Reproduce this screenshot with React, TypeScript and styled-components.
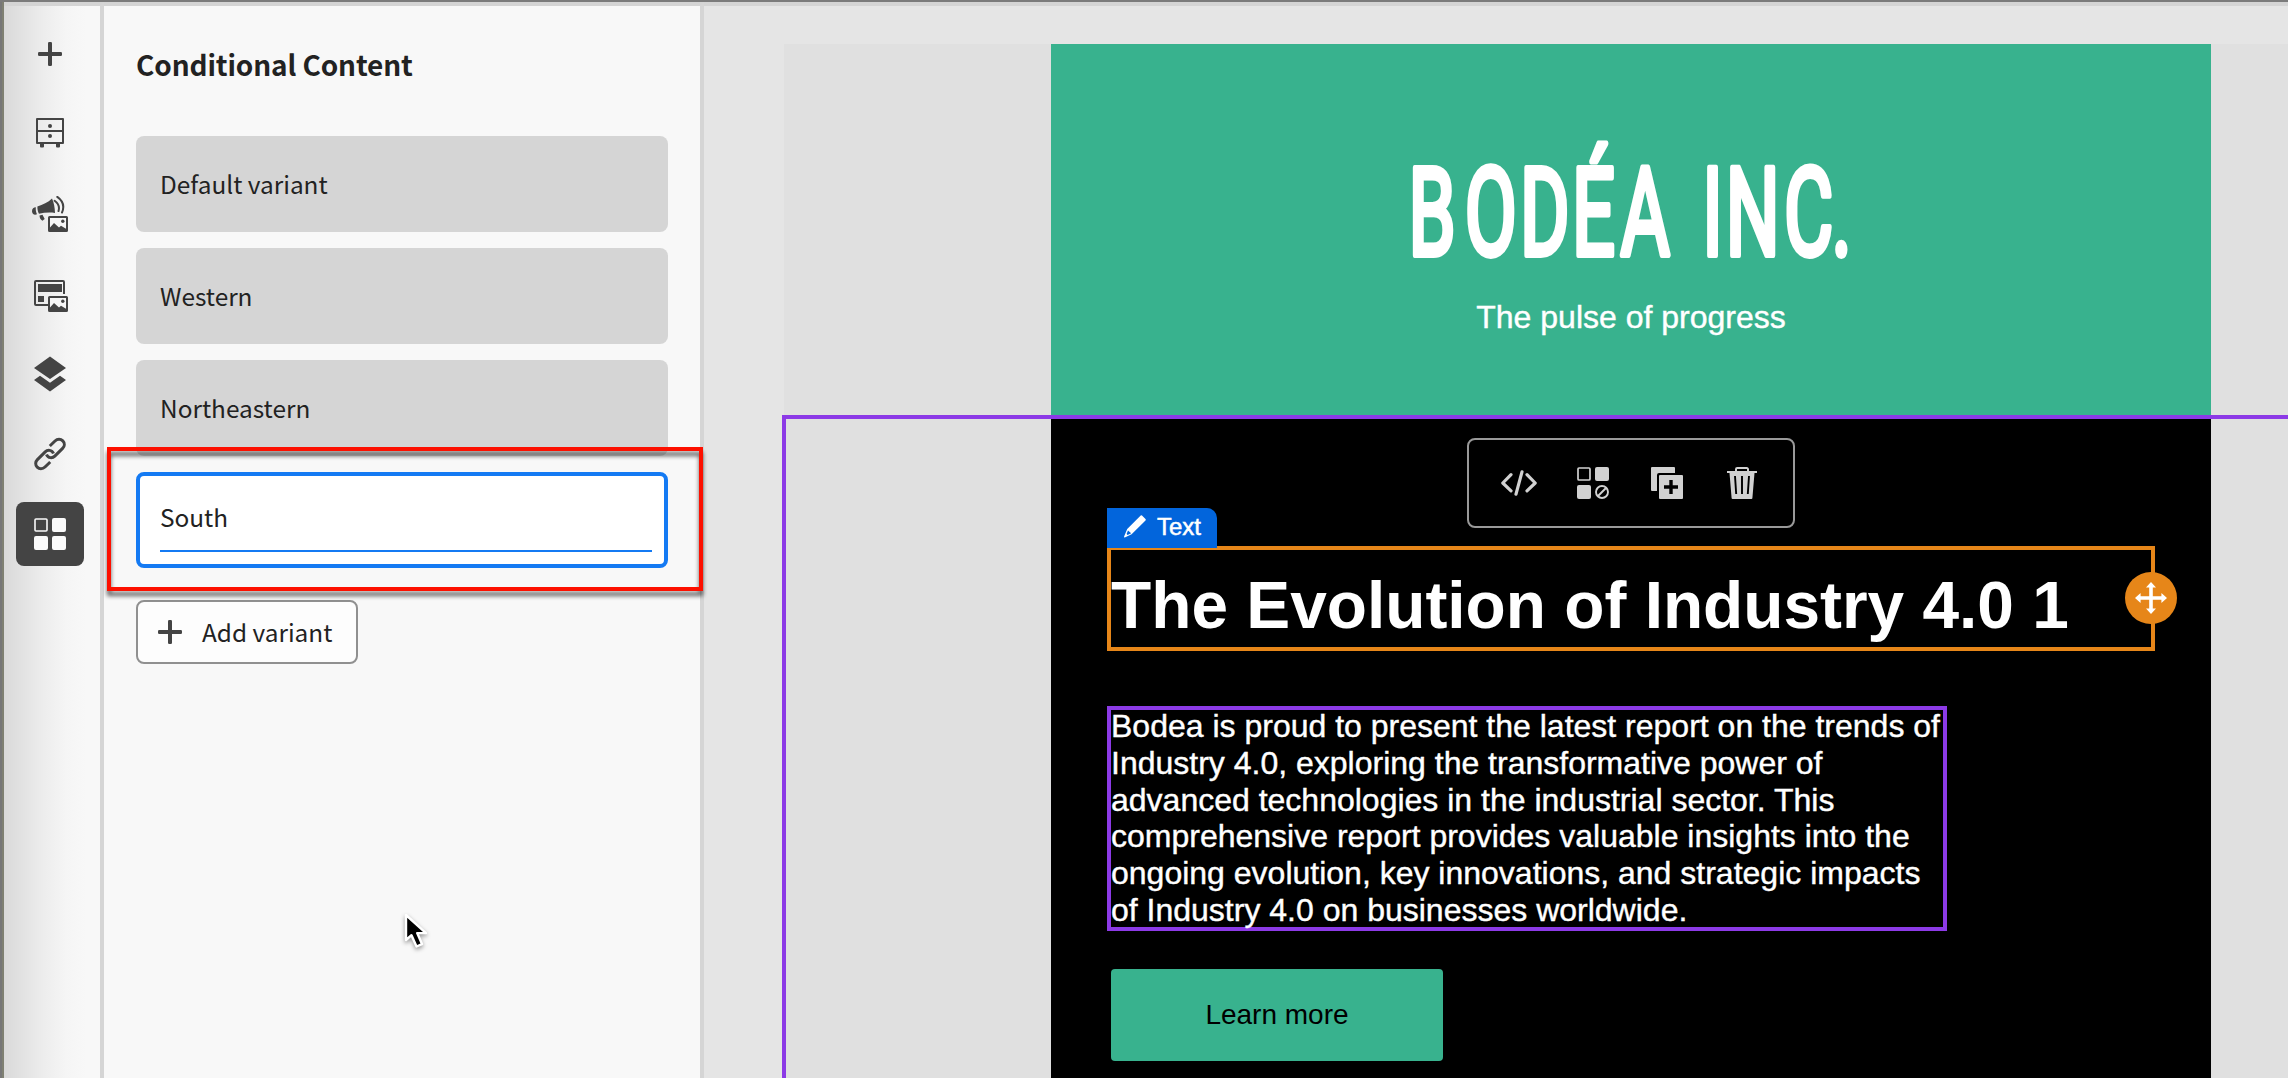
import React from "react";
import styled, { createGlobalStyle } from "styled-components";

const clean = `"Noto Sans CJK SC", "Noto Sans", sans-serif`;
const arial = `"Liberation Sans", Arial, sans-serif`;

const GlobalStyle = createGlobalStyle`
  *, *::before, *::after { box-sizing: border-box; }
  body { margin: 0; overflow: hidden; background: #e5e5e5; }
  h1, h2, p { margin: 0; }
  button { font: inherit; color: inherit; border: 0; padding: 0; margin: 0; background: none; }
`;

const Window = styled.div`
  position: relative;
  display: flex;
  width: 2288px;
  height: 1078px;
  overflow: hidden;
  border-top: 2px solid #7b7b7b;
  font-family: ${clean};
  color: #222;
`;

const EdgeStrip = styled.div`
  flex: none;
  width: 4px;
  background: linear-gradient(90deg, #777 0 50%, #7f8072 50%);
`;

const Rail = styled.nav`
  flex: none;
  width: 100px;
  border-top: 4px solid #d4d4d4;
  border-right: 4px solid #d5d5d5;
  padding: 16px 0 0 12px;
  display: flex;
  flex-direction: column;
  gap: 16px;
  background: linear-gradient(90deg, #d9d9d9 0, #e2e2e2 18px, #ededed 40px, #f5f5f5 62px, #f8f8f8 82px);
`;

const RailButton = styled.button<{ $active?: boolean }>`
  width: 68px;
  height: 64px;
  border-radius: 8px;
  display: flex;
  align-items: center;
  justify-content: center;
  background: ${(p) => (p.$active ? "#444" : "transparent")};
  color: ${(p) => (p.$active ? "#fafafa" : "#444")};
`;

const Panel = styled.aside`
  flex: none;
  width: 600px;
  border-top: 4px solid #d4d4d4;
  border-right: 4px solid #d5d5d5;
  background: #f8f8f8;
  padding: 36px 32px 0;
`;

const PanelTitle = styled.h2`
  height: 94px;
  line-height: 44px;
  font-size: 28px;
  font-weight: 700;
  letter-spacing: -0.12px;
`;

const VariantList = styled.div`
  display: flex;
  flex-direction: column;
  gap: 16px;
`;

const Variant = styled.div`
  height: 96px;
  border-radius: 8px;
  background: #d5d5d5;
  padding: 0 24px 1px;
  display: flex;
  align-items: center;
  font-size: 24.4px;
`;

const VariantEditor = styled.div`
  height: 96px;
  border-radius: 8px;
  border: 4px solid #147af3;
  background: #fff;
  padding: 16px 12px 0 20px;
`;

const VariantInput = styled.div`
  height: 60px;
  border-bottom: 2px solid #147af3;
  font-size: 24.4px;
  line-height: 50px;
`;

const AddVariant = styled.button`
  margin-top: 32px;
  width: 222px;
  height: 64px;
  border: 2px solid #909090;
  border-radius: 8px;
  background: #fdfdfd;
  padding-left: 20px;
  display: flex;
  align-items: center;
  gap: 20px;
  font-size: 24.4px;
  white-space: nowrap;
`;

const AddLabel = styled.span`
  padding-bottom: 2px;
`;

const Highlight = styled.div`
  position: absolute;
  left: 107px;
  top: 445px;
  width: 596px;
  height: 144px;
  border: 4px solid #fd1000;
  filter: drop-shadow(0 5px 2px rgba(0, 0, 0, 0.6));
`;

const Pointer = styled.svg`
  position: absolute;
  left: 398px;
  top: 903px;
`;

const Canvas = styled.main`
  flex: 1;
  min-width: 0;
  border-top: 4px solid #d4d4d4;
  background: #e5e5e5;
  padding: 38px 0 0 80px;
  font-family: ${arial};
`;

const Stage = styled.div`
  height: 100%;
  background: #e0e0e0;
  display: flex;
  flex-direction: column;
`;

const Header = styled.section`
  flex: none;
  margin-left: 267px;
  width: 1160px;
  height: 371px;
  background: #38b28e;
  color: #fff;
  display: flex;
  flex-direction: column;
  align-items: center;
  padding-top: 73px;
`;

const Tagline = styled.p`
  margin-top: 42px;
  font-size: 32px;
  line-height: 37px;
  -webkit-text-stroke: 0.4px #fff;
`;

const Structure = styled.section`
  flex: 1;
  margin-left: -2px;
  border: solid #8c3ae6;
  border-width: 4px 0 0 4px;
`;

const Body = styled.div`
  position: relative;
  margin-left: 265px;
  width: 1160px;
  height: 100%;
  padding: 127px 0 0 56px;
  background: #000;
  color: #fff;
`;

const Toolbar = styled.div`
  position: absolute;
  left: 416px;
  top: 19px;
  width: 328px;
  height: 90px;
  border: 2px solid #999;
  border-radius: 8px;
  background: #000;
  color: #d1d1d1;
  display: flex;
  align-items: center;
  padding-left: 32px;
  gap: 38.2px;
`;

const Selected = styled.div`
  position: relative;
  width: 1048px;
  height: 105px;
  border: 4px solid #e68619;
`;

const Heading = styled.h1`
  font-size: 65.8px;
  line-height: 77px;
  padding-top: 17px;
  font-weight: 700;
  white-space: nowrap;
`;

const Tag = styled.div`
  position: absolute;
  left: -4px;
  top: -42px;
  width: 110px;
  height: 40px;
  border-top-right-radius: 10px;
  background: #0265dc;
  display: flex;
  align-items: center;
  padding: 0 0 3px 17px;
  gap: 11px;
  font-size: 24px;
  -webkit-text-stroke: 0.5px #fff;
`;

const MoveHandle = styled.div`
  position: absolute;
  right: -26px;
  top: 22px;
  width: 52px;
  height: 52px;
  border-radius: 50%;
  background: #e68619;
  display: flex;
  align-items: center;
  justify-content: center;
`;

const Copy = styled.p`
  margin-top: 55px;
  width: 840px;
  height: 225px;
  border: 4px solid #8c3ae6;
  font-size: 32px;
  line-height: 36.8px;
  white-space: nowrap;
  -webkit-text-stroke: 0.4px #fff;
`;

const CopyText = styled.span`
  display: block;
  margin-top: -2px;
`;

const LearnMore = styled.button`
  display: block;
  margin: 38px 0 0 4px;
  width: 332px;
  height: 92px;
  border-radius: 4px;
  background: #38b28e;
  color: #000;
  font-size: 28px;
`;

const LogoText = styled.text`
  font-family: Roboto, sans-serif;
  font-size: 122px;
  font-weight: 400;
  fill: #fff;
  stroke: #fff;
  stroke-width: 5px;
  stroke-linejoin: round;
  vector-effect: non-scaling-stroke;
`;

const Picture = ({ x, y }: { x: number; y: number }) => (
  <g transform={`translate(${x} ${y})`}>
    <rect x="1" y="1" width="18" height="14" rx="0.5" fill="#f6f6f6" stroke="currentColor" strokeWidth="2" />
    <circle cx="14.8" cy="5.2" r="1.7" fill="currentColor" />
    <path d="M2 11.5 6 7l5 4.5 2-1.8 5 3V15H2z" fill="currentColor" />
  </g>
);

const Plus = () => (
  <svg width="24" height="24" viewBox="0 0 24 24" fill="#444">
    <rect x="10" y="0" width="4" height="24" rx="1.2" />
    <rect x="0" y="10" width="24" height="4" rx="1.2" />
  </svg>
);

const Icon = ({ children }: { children: React.ReactNode }) => (
  <svg width="36" height="36" viewBox="0 0 36 36" fill="none" stroke="none">
    {children}
  </svg>
);

const Cabinet = () => (
  <Icon>
    <path d="M5 3h26v24H5zM5 15h26" stroke="currentColor" strokeWidth="2" strokeLinejoin="round" />
    <circle cx="18" cy="10" r="2" fill="currentColor" />
    <circle cx="18" cy="20" r="2" fill="currentColor" />
    <path d="M8 27h4v3.5a1 1 0 0 1-1 1H9a1 1 0 0 1-1-1zM24 27h4v3.5a1 1 0 0 1-1 1h-2a1 1 0 0 1-1-1z" fill="currentColor" />
  </Icon>
);

const Megaphone = () => (
  <Icon>
    <path d="M20 2.6c2 4.2 2.8 9.200 3 14.400C17.500 16.200 12 16.700 7 17.800 5.800 15.500 5.300 13 5.400 10.400 10.800 8.800 16 6.500 20 2.600z" fill="currentColor" />
    <path d="M3.900 11.300c-.4 2.200 0 4.700 1.100 6.900C2.400 19.600 0 17.800 0 15.300c0-2.500 1.600-3.900 3.900-4z" fill="currentColor" />
    <path d="m7.500 19.600 3-.8 2.200 4.200-2.300 1.800c-1.800-.8-2.800-2.900-2.900-5.200z" fill="currentColor" />
    <path d="M22.600 4.800c3.900 2.700 5.100 6.300 3.900 10.300M25.300.9c5.600 4 7.300 9.600 4.700 15.600" stroke="currentColor" strokeWidth="2" strokeLinecap="round" />
    <Picture x={16} y={20} />
  </Icon>
);

const Template = () => (
  <Icon>
    <path d="M32 18V6a1 1 0 0 0-1-1H4a1 1 0 0 0-1 1v22a1 1 0 0 0 1 1h12" stroke="currentColor" strokeWidth="2" />
    <path d="M6 8h24v8H6zM6 20h6v6H6z" fill="currentColor" />
    <Picture x={16} y={20} />
  </Icon>
);

const Layers = () => (
  <Icon>
    <path d="m18 .5 16 11.400L18 23 2 11.900zM8 19.800l10 7 10-7 6 4.200-16 11.500L2 24z" fill="currentColor" />
  </Icon>
);

const Link = () => (
  <Icon>
    <g stroke="currentColor" strokeWidth="3">
      <path d="M17.800 10 23 5c2.400-2.300 5.700-2.200 7.800-.1s2 5.300-.2 7.500l-7.800 7.700c-2.300 2.300-6.800 2.300-8.300-1.600" />
      <path d="m18.200 26-5.200 5c-2.400 2.300-5.700 2.200-7.800.1s-2-5.300.2-7.500l7.800-7.700c2.300-2.300 6.800-2.300 8.300 1.600" />
    </g>
  </Icon>
);

const Variants = () => (
  <Icon>
    <rect x="3" y="3" width="12" height="12" rx="1" stroke="currentColor" strokeWidth="1.600" />
    <path d="M22 2h10a2 2 0 0 1 2 2v10a2 2 0 0 1-2 2H22a2 2 0 0 1-2-2V4a2 2 0 0 1 2-2zM4 20h10a2 2 0 0 1 2 2v10a2 2 0 0 1-2 2H4a2 2 0 0 1-2-2V22a2 2 0 0 1 2-2zM22 20h10a2 2 0 0 1 2 2v10a2 2 0 0 1-2 2H22a2 2 0 0 1-2-2V22a2 2 0 0 1 2-2z" fill="currentColor" />
  </Icon>
);

const Code = () => (
  <Icon>
    <path d="M10 9.600 1.800 18l8.200 7.800M26 9.600l8.200 8.400-8.200 7.800M21 6.800l-6 22.400" stroke="currentColor" strokeWidth="3.200" strokeLinecap="round" strokeLinejoin="round" />
  </Icon>
);

const VariantsOff = () => (
  <Icon>
    <rect x="3" y="3" width="12" height="12" rx="1" stroke="currentColor" strokeWidth="1.700" />
    <rect x="20" y="2" width="14" height="14" rx="2" fill="currentColor" />
    <rect x="2" y="20" width="14" height="14" rx="2" fill="currentColor" />
    <circle cx="27" cy="27" r="6" stroke="currentColor" strokeWidth="1.900" />
    <path d="m23 31 8-8" stroke="currentColor" strokeWidth="1.900" />
  </Icon>
);

const Duplicate = () => (
  <Icon>
    <path d="M3 2h22a1 1 0 0 1 1 1v5H10a2 2 0 0 0-2 2v16H3a1 1 0 0 1-1-1V3a1 1 0 0 1 1-1z" fill="currentColor" />
    <rect x="10" y="10" width="24" height="24" rx="1" fill="currentColor" />
    <path d="M22 15v14M15 22h14" stroke="#000" strokeWidth="3.400" />
  </Icon>
);

const Trash = () => (
  <Icon>
    <path d="M12 7V4.200A1.200 1.200 0 0 1 13.200 3h9.600A1.200 1.200 0 0 1 24 4.200V7" stroke="currentColor" strokeWidth="2" />
    <path d="M3 6h30v2h-2.500l-2.100 25a1 1 0 0 1-1 1H8.600a1 1 0 0 1-1-1L5.500 8H3z" fill="currentColor" />
    <path d="m11 11 1.200 18M18 11v18M25 11l-1.200 18" stroke="#000" strokeWidth="1.900" />
  </Icon>
);

const Pencil = () => (
  <svg width="22" height="23" viewBox="0 0 22 23">
    <path d="M16.700.6a1 1 0 0 1 1.300 0l3.500 3.500a1 1 0 0 1 0 1.300L7.600 19.200.8 22.400a.6.6 0 0 1-.7-.8L3.200 14z" fill="#fff" />
    <path d="m4 15.500 3.200 2.800-3.700 1.800-.9-1z" fill="#0265dc" />
  </svg>
);

const Move = () => (
  <svg width="34" height="34" viewBox="0 0 34 34" fill="#fff">
    <path d="M17 1l5 5.600h-3.200v8.600h8.600V12L33 17l-5.600 5v-3.200h-8.600v8.600H22L17 33l-5-5.600h3.200v-8.600H6.600V22L1 17l5.600-5v3.200h8.600V6.600H12z" />
  </svg>
);

const Logo = () => (
  <svg width="460" height="140" viewBox="1400 117 460 140" overflow="visible">
    <LogoText
      transform="scale(0.62 1)"
      y="255.500"
      x="2270 2361 2450 2534 2612 2700 2744 2782 2876 2953"
    >
      BODÉA INC.
    </LogoText>
  </svg>
);

const railItems = [
  { id: "add", icon: <Plus /> },
  { id: "components", icon: <Cabinet /> },
  { id: "assets", icon: <Megaphone /> },
  { id: "templates", icon: <Template /> },
  { id: "layers", icon: <Layers /> },
  { id: "links", icon: <Link /> },
  { id: "conditional", icon: <Variants />, active: true },
];

const copyLines = [
  "Bodea is proud to present the latest report on the trends of",
  "Industry 4.0, exploring the transformative power of",
  "advanced technologies in the industrial sector. This",
  "comprehensive report provides valuable insights into the",
  "ongoing evolution, key innovations, and strategic impacts",
  "of Industry 4.0 on businesses worldwide.",
];

export default function App() {
  return (
    <>
      <GlobalStyle />
      <Window>
        <EdgeStrip />
        <Rail>
          {railItems.map((item) => (
            <RailButton key={item.id} $active={item.active}>
              {item.icon}
            </RailButton>
          ))}
        </Rail>
        <Panel>
          <PanelTitle>Conditional Content</PanelTitle>
          <VariantList>
            <Variant>Default variant</Variant>
            <Variant>Western</Variant>
            <Variant>Northeastern</Variant>
            <VariantEditor>
              <VariantInput>South</VariantInput>
            </VariantEditor>
          </VariantList>
          <AddVariant>
            <Plus />
            <AddLabel>Add variant</AddLabel>
          </AddVariant>
        </Panel>
        <Canvas>
          <Stage>
            <Header>
              <Logo />
              <Tagline>The pulse of progress</Tagline>
            </Header>
            <Structure>
              <Body>
                <Toolbar>
                  <Code />
                  <VariantsOff />
                  <Duplicate />
                  <Trash />
                </Toolbar>
                <Selected>
                  <Heading>The Evolution of Industry 4.0 1</Heading>
                  <Tag>
                    <Pencil />
                    Text
                  </Tag>
                  <MoveHandle>
                    <Move />
                  </MoveHandle>
                </Selected>
                <Copy>
                  <CopyText>
                    {copyLines.map((line) => (
                      <React.Fragment key={line}>
                        {line}
                        <br />
                      </React.Fragment>
                    ))}
                  </CopyText>
                </Copy>
                <LearnMore>Learn more</LearnMore>
              </Body>
            </Structure>
          </Stage>
        </Canvas>
        <Highlight />
        <Pointer width="40" height="50" viewBox="0 0 40 50">
          <path
            d="M8 10v25l5.500-4.800 5 11.300 5.500-2.400-4.800-11H28z"
            fill="#000"
            stroke="#fff"
            strokeWidth="2.400"
            strokeLinejoin="round"
            filter="drop-shadow(0 2px 2px rgba(0,0,0,0.4))"
          />
        </Pointer>
      </Window>
    </>
  );
}
